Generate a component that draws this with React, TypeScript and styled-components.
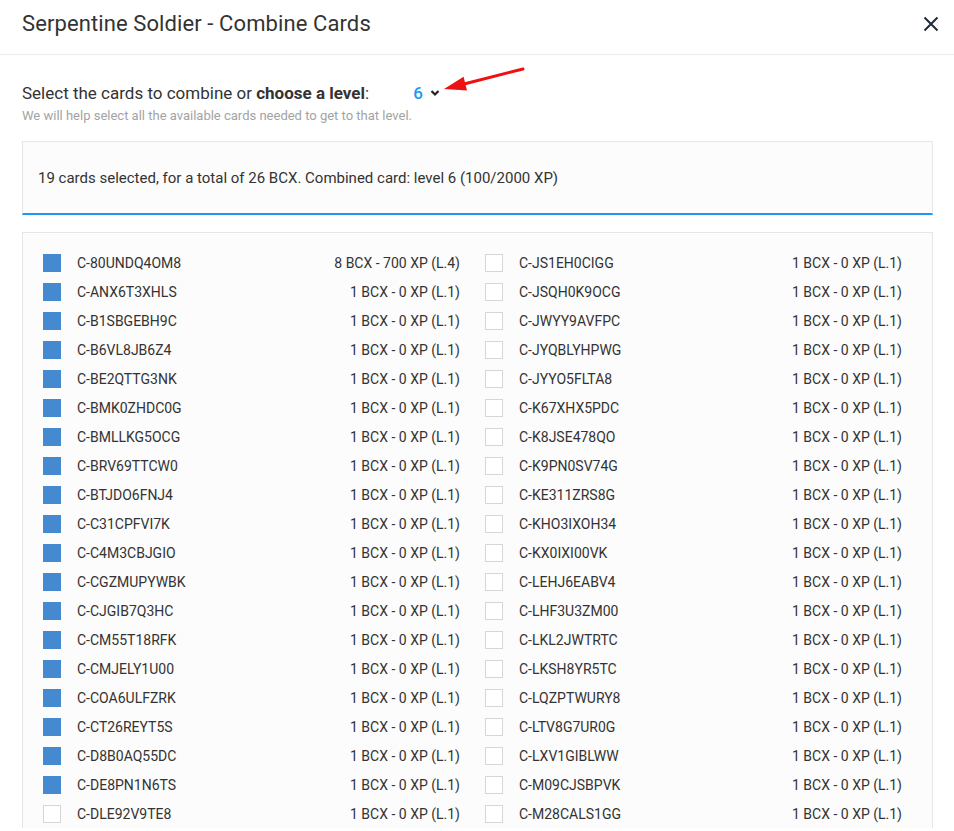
import React from "react"
import styled, { createGlobalStyle } from "styled-components"

const GlobalStyle = createGlobalStyle`
    html, body {
        margin: 0;
        padding: 0;
        background: #fff;
        font-family: Roboto, "Liberation Sans", sans-serif;
        color: #333;
    }
`

const Modal = styled.section`
    width: 954px;
    height: 831px;
    overflow: hidden;
    background: #fff;
`
const Header = styled.header`
    height: 55px;
    display: flex;
    align-items: center;
    justify-content: space-between;
    padding: 0 11px 7px 22px;
    border-bottom: 1px solid #ececec;
    box-sizing: border-box;
`
const Title = styled.h1`
    margin: 0;
    font-size: 22px;
    font-weight: 400;
    color: #333;
    letter-spacing: 0.1px;
`
const CloseButton = styled.button`
    border: none;
    background: none;
    padding: 0;
    width: 24px;
    height: 24px;
    display: flex;
    align-items: center;
    justify-content: center;
    color: #222;
`
const Body = styled.div`
    padding: 25px 21px 0 22px;
`
const LevelLine = styled.div`
    position: relative;
    display: flex;
    align-items: center;
    font-size: 17px;
    height: 26px;
    color: #333;
`
const Strong = styled.b`
    font-weight: 700;
`
const LevelSelect = styled.span`
    display: flex;
    align-items: center;
    margin-left: 44px;
    color: #2196f3;
    font-weight: 500;
    font-size: 17px;
    gap: 7px;
`
const Arrow = styled.svg`
    position: absolute;
    left: 418px;
    top: -15px;
`
const Hint = styled.div`
    font-size: 13px;
    color: #a3a3a3;
    margin-top: 2px;
`
const Summary = styled.div`
    margin-top: 18px;
    height: 74px;
    box-sizing: border-box;
    background: #fcfcfc;
    border: 1px solid #e6e6e6;
    border-bottom: 2px solid #2196f3;
    display: flex;
    align-items: center;
    padding: 1px 15px 0;
    font-size: 15px;
    color: #333;
`
const CardList = styled.div`
    margin-top: 17px;
    background: #fcfcfc;
    border: 1px solid #e6e6e6;
    border-bottom: none;
    padding: 15px 30px 0 20px;
    display: grid;
    grid-template-columns: 417px 417px;
    column-gap: 25px;
`
const Column = styled.div`
    display: flex;
    flex-direction: column;
`
const Row = styled.label`
    height: 29px;
    display: flex;
    align-items: center;
    font-size: 14px;
    color: #333;
`
const Box = styled.span<{ $checked: boolean }>`
    width: 18px;
    height: 18px;
    box-sizing: border-box;
    flex-shrink: 0;
    background: ${p => (p.$checked ? "#4589d0" : "#fff")};
    border: 1px solid ${p => (p.$checked ? "#4589d0" : "#d6d6d6")};
`
const Name = styled.span`
    margin-left: 16px;
    flex: 1;
`
const Value = styled.span`
    text-align: right;
`

type Card = { id: string; value: string; checked: boolean }

const one = "1 BCX - 0 XP (L.1)"

const left: Card[] = [
    { id: "C-80UNDQ4OM8", value: "8 BCX - 700 XP (L.4)", checked: true },
    ...[
        "C-ANX6T3XHLS", "C-B1SBGEBH9C", "C-B6VL8JB6Z4", "C-BE2QTTG3NK", "C-BMK0ZHDC0G",
        "C-BMLLKG5OCG", "C-BRV69TTCW0", "C-BTJDO6FNJ4", "C-C31CPFVI7K", "C-C4M3CBJGIO",
        "C-CGZMUPYWBK", "C-CJGIB7Q3HC", "C-CM55T18RFK", "C-CMJELY1U00", "C-COA6ULFZRK",
        "C-CT26REYT5S", "C-D8B0AQ55DC", "C-DE8PN1N6TS",
    ].map(id => ({ id, value: one, checked: true })),
    { id: "C-DLE92V9TE8", value: one, checked: false },
]

const right: Card[] = [
    "C-JS1EH0CIGG", "C-JSQH0K9OCG", "C-JWYY9AVFPC", "C-JYQBLYHPWG", "C-JYYO5FLTA8",
    "C-K67XHX5PDC", "C-K8JSE478QO", "C-K9PN0SV74G", "C-KE311ZRS8G", "C-KHO3IXOH34",
    "C-KX0IXI00VK", "C-LEHJ6EABV4", "C-LHF3U3ZM00", "C-LKL2JWTRTC", "C-LKSH8YR5TC",
    "C-LQZPTWURY8", "C-LTV8G7UR0G", "C-LXV1GIBLWW", "C-M09CJSBPVK", "C-M28CALS1GG",
].map(id => ({ id, value: one, checked: false }))

const CardColumn: React.FC<{ cards: Card[] }> = ({ cards }) => (
    <Column>
        {cards.map(c => (
            <Row key={c.id}>
                <Box $checked={c.checked} />
                <Name>{c.id}</Name>
                <Value>{c.value}</Value>
            </Row>
        ))}
    </Column>
)

export default function App() {
    return (
        <Modal>
            <GlobalStyle />
            <Header>
                <Title>Serpentine Soldier - Combine Cards</Title>
                <CloseButton>
                    <svg width="16" height="16" viewBox="0 0 16 16">
                        <path d="M1.5 1.5 L14.5 14.5 M14.5 1.5 L1.5 14.5" stroke="#1f2937" strokeWidth="2" />
                    </svg>
                </CloseButton>
            </Header>
            <Body>
                <LevelLine>
                    <span>
                        Select the cards to combine or <Strong>choose a level</Strong>:
                    </span>
                    <LevelSelect>
                        6
                        <svg width="10" height="8" viewBox="0 0 10 8">
                            <path d="M1.5 2 L5 5.5 L8.5 2" stroke="#222" strokeWidth="2.2" fill="none" />
                        </svg>
                    </LevelSelect>
                    <Arrow width="90" height="34" viewBox="0 0 90 34">
                        <path d="M83 4 L24 19" stroke="#ee1111" strokeWidth="3" strokeLinecap="round" />
                        <polygon points="4,24 23.6,11.8 27,25.4" fill="#ee1111" />
                    </Arrow>
                </LevelLine>
                <Hint>We will help select all the available cards needed to get to that level.</Hint>
                <Summary>19 cards selected, for a total of 26 BCX. Combined card: level 6 (100/2000 XP)</Summary>
                <CardList>
                    <CardColumn cards={left} />
                    <CardColumn cards={right} />
                </CardList>
            </Body>
        </Modal>
    )
}
